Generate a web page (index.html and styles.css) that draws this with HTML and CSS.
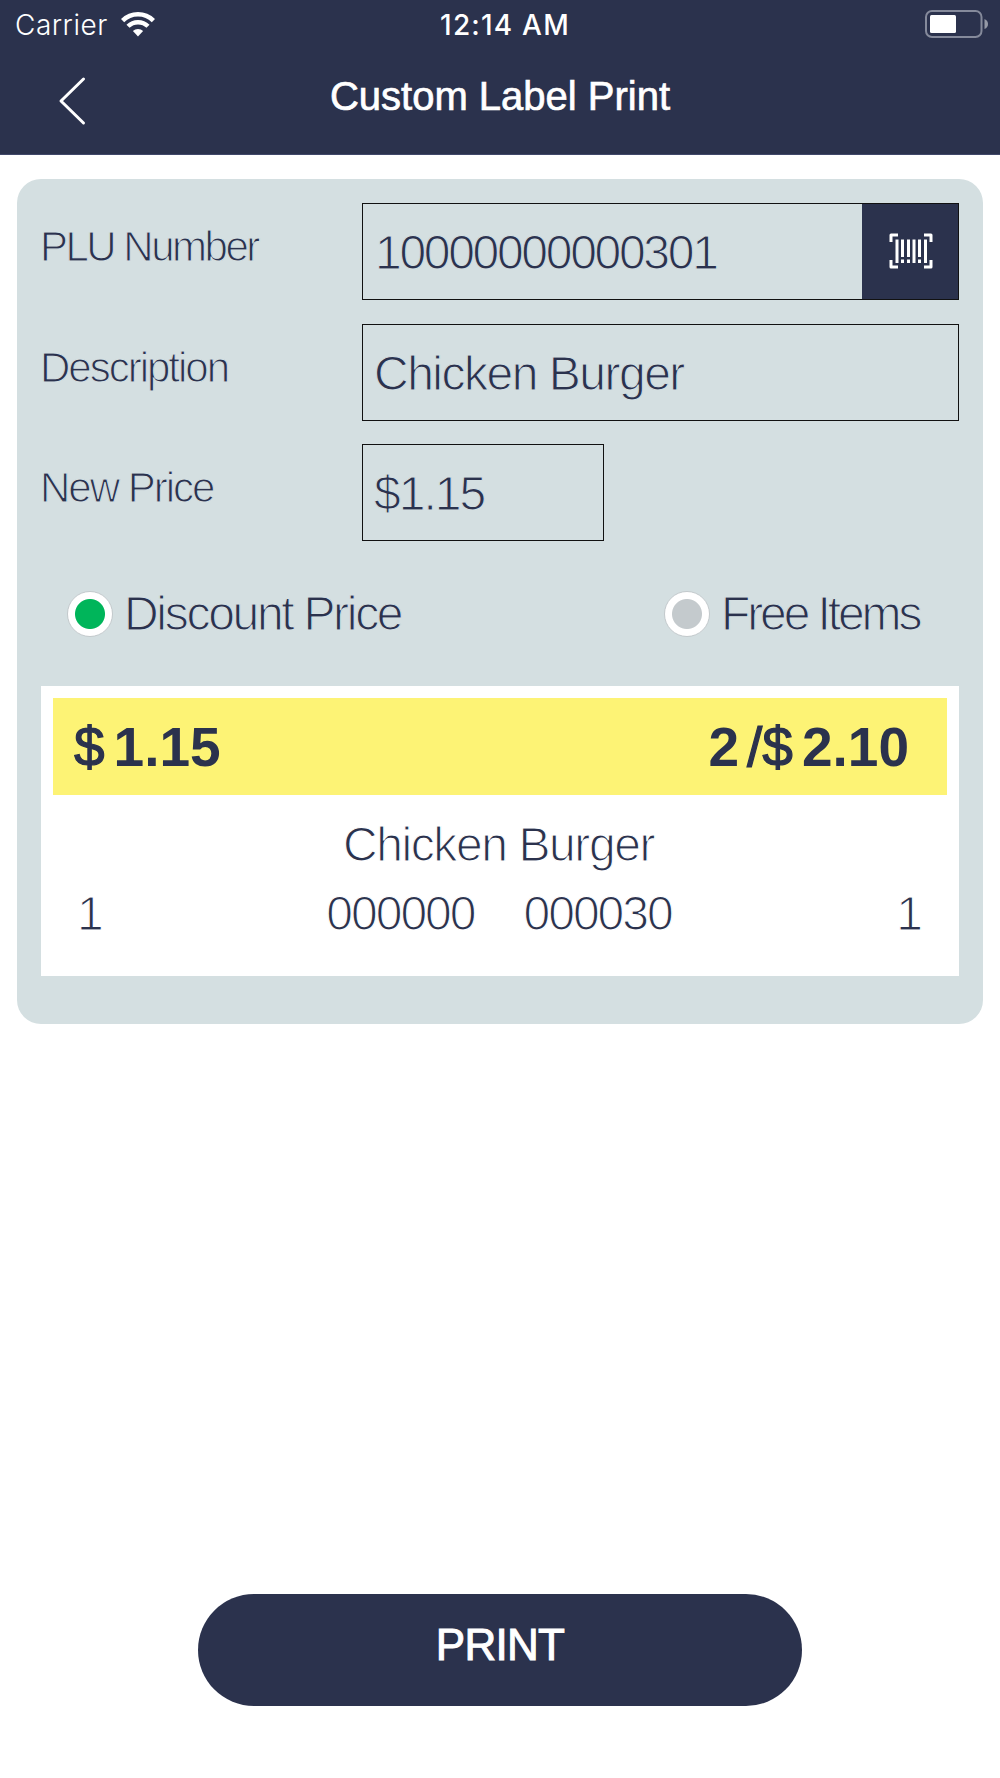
FILE: index.html
```html
<!DOCTYPE html>
<html lang="en">
<head>
<meta charset="utf-8">
<title>Custom Label Print</title>
<link rel="stylesheet" href="styles.css">
</head>
<body>
<header class="header">
  <div class="status">
    <div class="carrier"><span>Carrier</span>
      <svg class="wifi" width="34" height="25" viewBox="0 0 34 25" fill="none" stroke="#fff"><path d="M1.6 8.6A22 22 0 0 1 32.4 8.6" stroke-width="4.6"/><path d="M7 14.3A14.3 14.3 0 0 1 27 14.3" stroke-width="4.4"/><path d="M17 24.4L11.9 19.1A7.3 7.3 0 0 1 22.1 19.1Z" fill="#fff" stroke="none"/></svg>
    </div>
    <div class="clock">12:14 AM</div>
    <svg class="battery" width="64" height="28" viewBox="0 0 64 28"><rect x="1" y="1" width="55.5" height="26" rx="6" fill="none" stroke="#858a9b" stroke-width="2"/><rect x="5" y="5" width="26" height="18" rx="1.5" fill="#fff"/><path d="M59.5 9Q63 10.500 63 14T59.500 19Z" fill="#9599a6"/></svg>
  </div>
  <nav class="nav">
    <svg class="back" width="28" height="50" viewBox="0 0 28 50" fill="none" stroke="#fff" stroke-width="3" stroke-linecap="round" stroke-linejoin="round"><path d="M25.500 3L3 25L25.500 47"/></svg>
    <h1 class="title">Custom Label Print</h1>
  </nav>
</header>
<main class="card">
  <div class="row">
    <label class="label plu">PLU Number</label>
    <div class="field"><span class="value digits">10000000000301</span>
      <button class="scan" aria-label="Scan">
        <svg width="44" height="36" viewBox="0 0 44 36" fill="none" stroke="#fff"><path d="M2 9V2H9M35 2H42V9M42 27V34H35M9 34H2V27" stroke-width="3" stroke-linejoin="round"/><path d="M8 6.500V30M25 6.500V30M36.500 6.500V30M13.500 6.500V24M19.500 6.500V24M30.500 6.500V24M13.500 26.500V30M19.500 26.500V30M30.500 26.500V30" stroke-width="3"/></svg>
      </button>
    </div>
  </div>
  <div class="row">
    <label class="label">Description</label>
    <div class="field"><span class="value">Chicken Burger</span></div>
  </div>
  <div class="row">
    <label class="label">New Price</label>
    <div class="field short"><span class="value price">$1.15</span></div>
  </div>
  <div class="options">
    <div class="option"><span class="radio on"></span><span class="choice">Discount Price</span></div>
    <div class="option free"><span class="radio"></span><span class="choice">Free Items</span></div>
  </div>
  <section class="preview">
    <div class="prices">
      <div class="amount"><span class="cur">$</span><b>1.15</b></div>
      <div class="amount"><b>2</b><span class="slash">/</span><span class="cur">$</span><b>2.10</b></div>
    </div>
    <div class="name">Chicken Burger</div>
    <div class="code"><span class="edge">1</span><span class="middle"><span>000000</span><span>000030</span></span><span class="edge last">1</span></div>
  </section>
</main>
<footer class="footer"><button class="print">PRINT</button></footer>
</body>
</html>
```
FILE: styles.css
```css
* { box-sizing: border-box; }
body {
  margin: 0;
  min-height: 1778px;
  display: flex;
  flex-direction: column;
  background: #fff;
  color: #2b324d;
  font-family: "Liberation Sans", Arial, sans-serif;
  white-space: nowrap;
}
button { border: 0; padding: 0; font: inherit; color: #fff; background: #2b324d; }
.header { height: 155px; background: #2b324d; color: #fff; border-bottom: 1px solid #41486a; }
.status {
  height: 50px;
  display: grid;
  grid-template-columns: 1fr auto 1fr;
  align-items: center;
  padding: 0 12px 0 15px;
  font-family: Inter, sans-serif;
  font-size: 28px;
}
.carrier { display: flex; align-items: center; gap: 13px; font-weight: 300; letter-spacing: 0.5px; }
.wifi { margin-bottom: 2px; }
.clock { font-weight: 500; letter-spacing: 1.2px; padding: 0 0 0 7px; }
.battery { justify-self: end; margin: 0 -1px 2px 0; }
.nav { height: 100px; display: grid; grid-template-columns: 100px 1fr 100px; }
.back { margin: 26px 0 0 58px; }
.title { margin: 0; font-size: 40px; line-height: 93px; font-weight: 400; text-align: center; -webkit-text-stroke: 0.7px #fff; }
.card {
  margin: 24px 17px 0;
  height: 845px;
  padding: 24px;
  border-radius: 24px;
  background: #d4dfe1;
  display: flex;
  flex-direction: column;
}
.row { display: grid; grid-template-columns: 321px 1fr; height: 97px; margin-bottom: 24px; }
.row:nth-child(2) { margin-bottom: 23px; }
/* A stroke in the background colour thins the letters to a light weight. */
.label { margin-left: -1px; font-size: 42px; line-height: 88px; letter-spacing: -2px; -webkit-text-stroke: 1.1px #d4dfe1; }
.plu { letter-spacing: -2.5px; }
.field { height: 97px; border: 1px solid #111; display: flex; justify-content: space-between; }
.short { width: 242px; }
.value { padding: 2px 0 0 11px; font-size: 48px; line-height: 94px; height: 95px; letter-spacing: -1.5px; -webkit-text-stroke: 1.1px #d4dfe1; }
.price { letter-spacing: -2px; }
.digits { padding-left: 12px; letter-spacing: -2.3px; }
.scan { width: 96px; display: grid; place-items: center; padding: 0 0 2px 1px; }
.options { display: flex; height: 121px; padding: 25px 0 0 26px; }
.option { display: flex; height: 48px; align-items: center; width: 597px; }
.option.free { width: auto; }
.radio { width: 46px; height: 46px; border: 1px solid #c4cacd; border-radius: 50%; background: radial-gradient(circle, #c4cacd 14.500px, #fff 15.500px); }
.radio.on { background: radial-gradient(circle, #00b55a 14.500px, #fff 15.500px); }
.choice { margin-left: 11px; font-size: 48px; line-height: 46px; letter-spacing: -2.3px; -webkit-text-stroke: 1.2px #d4dfe1; }
.free .choice { letter-spacing: -3.1px; }
.preview { height: 290px; padding: 12px; background: #fff; }
.prices { height: 97px; padding: 0 38px 0 21px; background: #fdf375; display: flex; justify-content: space-between; font-size: 55px; line-height: 98px; }
.amount { display: flex; }
.cur { margin-right: 9px; -webkit-text-stroke: 1.2px #2b324d; }
.slash { margin-left: 8px; -webkit-text-stroke: 1.2px #2b324d; }
.name { margin-top: 16px; padding-right: 3px; text-align: center; font-size: 48px; line-height: 68px; letter-spacing: -1.4px; -webkit-text-stroke: 1.2px #fff; }
.code { display: grid; grid-template-columns: 1fr auto 1fr; margin-top: 1px; padding: 0 26px 0 24px; font-size: 48px; line-height: 68px; letter-spacing: -2px; -webkit-text-stroke: 1.2px #fff; }
.middle { display: flex; gap: 49px; }
.last { text-align: right; }
.footer { margin-top: auto; padding-bottom: 72px; display: flex; justify-content: center; }
.print { width: 604px; height: 112px; border-radius: 56px; padding-bottom: 10px; font-size: 44px; letter-spacing: -0.7px; -webkit-text-stroke: 1px #fff; }
```
